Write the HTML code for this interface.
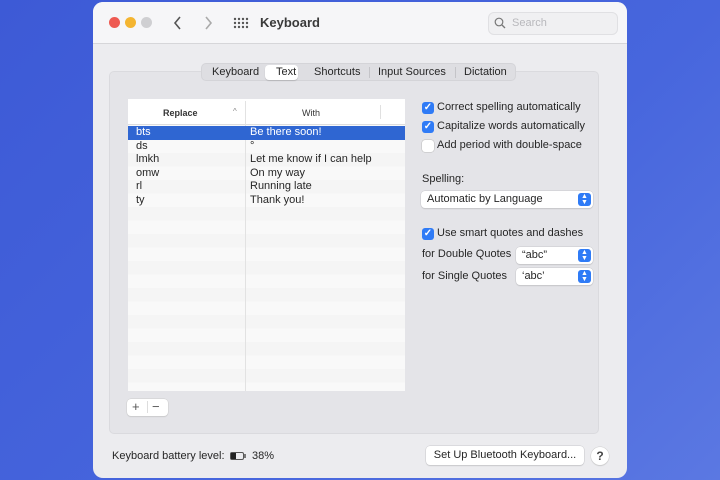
<!DOCTYPE html>
<html><head><meta charset="utf-8"><style>
*{box-sizing:border-box;margin:0;padding:0}
body{width:720px;height:480px;overflow:hidden;background:linear-gradient(135deg,#3d5ad6,#4766dd 60%,#5b78e2);font-family:"Liberation Sans",sans-serif;color:#262626;font-size:11px;position:relative}
.win{position:absolute;left:93px;top:2px;width:534px;height:476px;background:#ececef;border-radius:10px;overflow:hidden}
.tb{position:absolute;left:0;top:0;width:100%;height:42px;background:#f6f6f8;border-bottom:1px solid #d6d6d9}
.dot{position:absolute;top:15px;width:11px;height:11px;border-radius:50%}
.abs{position:absolute}
.panel{position:absolute;left:16px;top:69px;width:490px;height:363px;background:#e4e4e8;border:1px solid #dadade;border-radius:5px}
.seg{position:absolute;left:108px;top:61px;width:315px;height:18px;background:#dedee2;border-radius:5px;border:1px solid #d4d4d8}
.seg span{position:absolute;top:2px;font-size:11px}
.tbl{position:absolute;left:35px;top:97px;width:277px;height:292px;background:repeating-linear-gradient(to bottom,#f5f5f5 0,#f5f5f5 13.5px,#f9f9f9 13.5px,#f9f9f9 27px);overflow:hidden}
.row{position:absolute;left:0;width:277px;height:13.5px;font-size:11px;line-height:13.5px}
.cb{position:absolute;left:329px;width:12px;height:12px;border-radius:3px;background:#2f7bf6;color:#fff;font-size:10px;line-height:12px;text-align:center;font-weight:bold}
.lbl{position:absolute;font-size:11px}
.pop{position:absolute;background:#fff;border-radius:4px;box-shadow:0 0 0 .5px #c8c8cc,0 1px 1px rgba(0,0,0,.15);height:17px;font-size:11px;line-height:17px;padding-left:6px}
.pop i{position:absolute;right:2px;top:2px;width:13px;height:13px;border-radius:3px;background:#2f7bf6;color:#fff;font-style:normal;font-size:7px;line-height:6px;text-align:center;padding-top:1px}
</style></head><body>
<div class="win">
<div class="tb">
<div class="dot" style="left:16px;background:#ee5a52"></div>
<div class="dot" style="left:32px;background:#f4b531"></div>
<div class="dot" style="left:48px;background:#cfcfd2"></div>
<svg class="abs" style="left:80px;top:14px" width="10" height="14"><path d="M7 1 L2 7 L7 13" stroke="#555" stroke-width="1.6" fill="none"/></svg>
<svg class="abs" style="left:110px;top:14px" width="10" height="14"><path d="M3 1 L8 7 L3 13" stroke="#aaa" stroke-width="1.6" fill="none"/></svg>
<svg class="abs" style="left:140px;top:15px" width="16" height="12" fill="#555"><circle cx="2" cy="2" r="1.2"/><circle cx="6" cy="2" r="1.2"/><circle cx="10" cy="2" r="1.2"/><circle cx="14" cy="2" r="1.2"/><circle cx="2" cy="6" r="1.2"/><circle cx="6" cy="6" r="1.2"/><circle cx="10" cy="6" r="1.2"/><circle cx="14" cy="6" r="1.2"/><circle cx="2" cy="10" r="1.2"/><circle cx="6" cy="10" r="1.2"/><circle cx="10" cy="10" r="1.2"/><circle cx="14" cy="10" r="1.2"/></svg>
<div class="abs" style="left:167px;top:13px;font-size:13px;font-weight:bold;color:#3a3a3a">Keyboard</div>
<div class="abs" style="left:395px;top:10px;width:130px;height:23px;background:#f0f0f2;border:1px solid #e0e0e3;border-radius:6px"></div>
<svg class="abs" style="left:401px;top:15px" width="12" height="12"><circle cx="5" cy="5" r="3.8" stroke="#777" stroke-width="1.2" fill="none"/><path d="M8 8 L11 11" stroke="#777" stroke-width="1.3"/></svg>
<div class="abs" style="left:419px;top:15px;color:#b8b8bc;font-size:11px">Search</div>
</div>
<div class="panel"></div>
<div class="seg">
<div class="abs" style="left:63px;top:1px;width:33px;height:15px;background:#fff;border-radius:4px;box-shadow:0 1px 1px rgba(0,0,0,.15)"></div>
<span style="left:10px">Keyboard</span><span style="left:74px">Text</span><span style="left:112px">Shortcuts</span><span style="left:176px">Input Sources</span><span style="left:262px">Dictation</span>
<div class="abs" style="left:167px;top:3px;width:1px;height:11px;background:#c4c4c8"></div>
<div class="abs" style="left:253px;top:3px;width:1px;height:11px;background:#c4c4c8"></div>
</div>
<div class="tbl">
<div class="abs" style="left:0;top:0;width:277px;height:26px;background:#fff;border-bottom:1px solid #ddd"></div>
<div class="abs" style="left:35px;top:9px;font-size:9px;font-weight:bold;color:#333">Replace</div>
<div class="abs" style="left:105px;top:8px;font-size:8px;color:#888">^</div>
<div class="abs" style="left:174px;top:9px;font-size:9px;color:#333">With</div>
<div class="abs" style="left:252px;top:6px;width:1px;height:14px;background:#e0e0e0"></div>
<div class="abs" style="left:117px;top:2px;width:1px;height:290px;background:#e2e2e2"></div>
<div class="row" style="top:27px;background:#2f66d2;color:#fff"><span class="abs" style="left:8px">bts</span><span class="abs" style="left:122px">Be there soon!</span></div>
<div class="row" style="top:40.5px"><span class="abs" style="left:8px">ds</span><span class="abs" style="left:122px">°</span></div>
<div class="row" style="top:54px"><span class="abs" style="left:8px">lmkh</span><span class="abs" style="left:122px">Let me know if I can help</span></div>
<div class="row" style="top:67.5px"><span class="abs" style="left:8px">omw</span><span class="abs" style="left:122px">On my way</span></div>
<div class="row" style="top:81px"><span class="abs" style="left:8px">rl</span><span class="abs" style="left:122px">Running late</span></div>
<div class="row" style="top:94.5px"><span class="abs" style="left:8px">ty</span><span class="abs" style="left:122px">Thank you!</span></div>
</div>
<div class="abs" style="left:34px;top:397px;width:41px;height:17px;background:#fff;border-radius:4px;box-shadow:0 0 0 .5px #ccc,0 1px 1px rgba(0,0,0,.12);font-size:13px;line-height:16px;color:#555"><span class="abs" style="left:5px">+</span><span class="abs" style="left:20px;top:2px;width:1px;height:12px;background:#ddd"></span><span class="abs" style="left:25px">−</span></div>
<div class="cb" style="top:100px">✓</div><div class="lbl" style="left:344px;top:99px">Correct spelling automatically</div>
<div class="cb" style="top:119px">✓</div><div class="lbl" style="left:344px;top:118px">Capitalize words automatically</div>
<div class="cb" style="top:138px;background:#fff;box-shadow:0 0 0 .5px #bbb"></div><div class="lbl" style="left:344px;top:137px">Add period with double-space</div>
<div class="lbl" style="left:329px;top:171px">Spelling:</div>
<div class="pop" style="left:328px;top:189px;width:172px">Automatic by Language<i>▲<br>▼</i></div>
<div class="cb" style="top:226px">✓</div><div class="lbl" style="left:344px;top:225px">Use smart quotes and dashes</div>
<div class="lbl" style="left:329px;top:246px">for Double Quotes</div>
<div class="pop" style="left:423px;top:245px;width:77px">“abc”<i>▲<br>▼</i></div>
<div class="lbl" style="left:329px;top:268px">for Single Quotes</div>
<div class="pop" style="left:423px;top:266px;width:77px">‘abc’<i>▲<br>▼</i></div>
<div class="lbl" style="left:19px;top:448px">Keyboard battery level:</div>
<div class="abs" style="left:137px;top:450px;width:14px;height:8px;border:1px solid #555;border-radius:2px"><div style="width:5px;height:6px;background:#222"></div></div>
<div class="abs" style="left:151px;top:452px;width:2px;height:4px;background:#777"></div>
<div class="lbl" style="left:159px;top:448px">38%</div>
<div class="pop" style="left:333px;top:444px;width:158px;text-align:center;padding:0;height:19px;line-height:19px">Set Up Bluetooth Keyboard...</div>
<div class="abs" style="left:498px;top:445px;width:18px;height:18px;border-radius:50%;background:#fff;box-shadow:0 0 0 .5px #ccc,0 1px 1px rgba(0,0,0,.15);text-align:center;line-height:18px;font-size:12px;font-weight:bold;color:#444">?</div>
</div>
</body></html>
